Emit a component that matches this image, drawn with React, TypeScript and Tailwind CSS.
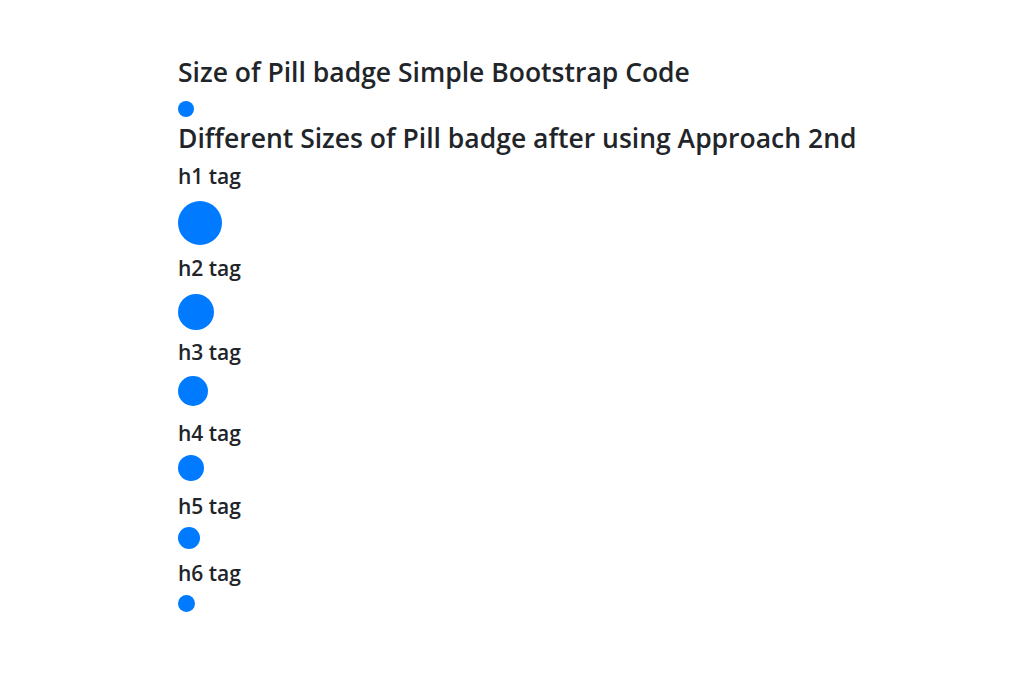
import React from "react";

const font = { fontFamily: '"Open Sans", "Noto Sans", sans-serif' };

const sizes = [
  { label: "h1 tag", dot: "h-[44px] w-[44px]", gap: "mt-[13px]", next: "mt-[11px]" },
  { label: "h2 tag", dot: "h-[36px] w-[36px]", gap: "mt-[14px]", next: "mt-[10px]" },
  { label: "h3 tag", dot: "h-[30px] w-[30px]", gap: "mt-[12px]", next: "mt-[15px]" },
  { label: "h4 tag", dot: "h-[26px] w-[26px]", gap: "mt-[10px]", next: "mt-[13px]" },
  { label: "h5 tag", dot: "h-[22px] w-[22px]", gap: "mt-[9px]", next: "mt-[12px]" },
  { label: "h6 tag", dot: "h-[17px] w-[17px]", gap: "mt-[10px]", next: "" },
];

export default function App() {
  return (
    <div className="min-h-screen bg-white pl-[178px] pt-[58px] text-[#212529]" style={font}>
      <h4 className="text-[26.5px] font-semibold leading-[29px]">
        Size of Pill badge Simple Bootstrap Code
      </h4>
      <span className="mt-[14px] block h-[16px] w-[16px] rounded-full bg-[#007bff]" />
      <h4 className="mt-[7px] text-[26.5px] font-semibold leading-[29px]">
        Different Sizes of Pill badge after using Approach 2nd
      </h4>
      <div className="mt-[11px] flex flex-col">
        {sizes.map((s, i) => (
          <div key={s.label} className={i > 0 ? sizes[i - 1].next : ""}>
            <h5 className="text-[21px] font-semibold leading-[24px]">{s.label}</h5>
            <span className={`${s.gap} block ${s.dot} rounded-full bg-[#007bff]`} />
          </div>
        ))}
      </div>
    </div>
  );
}
